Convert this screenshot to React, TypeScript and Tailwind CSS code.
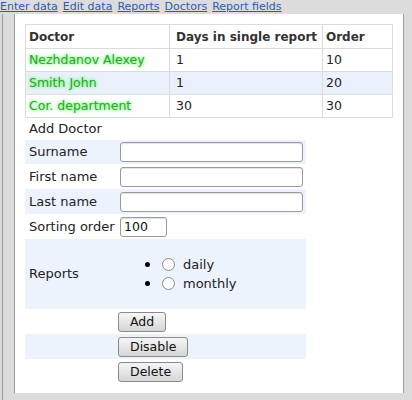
import React from 'react';

const navLinks = ['Enter data', 'Edit data', 'Reports', 'Doctors', 'Report fields'];

const doctors = [
  { name: 'Nezhdanov Alexey', days: '1', order: '10' },
  { name: 'Smith John', days: '1', order: '20' },
  { name: 'Cor. department', days: '30', order: '30' },
];

const font = { fontFamily: '"DejaVu Sans", Verdana, sans-serif' };

const TextInput = ({ className = '', value = '' }: any) => (
  <input
    defaultValue={value}
    className={`block h-[20px] rounded-[3px] border border-[#9a9a9a] bg-white px-[3px] text-[12.5px] text-[#111] outline-none shadow-[inset_0_1px_1px_rgba(0,0,0,0.12)] ${className}`}
  />
);

const Btn = ({ label }: any) => (
  <button className="block h-[20px] rounded-[3px] border border-[#8a8a8a] bg-gradient-to-b from-[#f6f6f6] to-[#d6d6d6] px-[11px] text-[12.5px] leading-[18px] text-[#111]">
    {label}
  </button>
);

export default function App() {
  return (
    <div style={font} className="min-h-[400px] w-[412px] bg-[#dcdcdc] text-[#222]">
      <div className="flex h-[14px] gap-[5px] text-[11px] leading-[13px]">
        {navLinks.map((l) => (
          <a key={l} href="#" className="text-[#2a5db0] underline">
            {l}
          </a>
        ))}
      </div>
      <div className="ml-[2px] min-h-[386px] border-l border-[#9a9a9a] pb-[8px] pl-[11px]">
        <div className="w-[390px] border-x border-[#9a9a9a] bg-white p-[10px] pb-[9px]">
          <table className="w-[368px] border-collapse text-[12.5px]">
            <thead>
              <tr className="h-[24px] text-[12px]">
                <th className="w-[144px] border border-[#dcdcdc] pl-[3px] text-left font-bold text-[#333]">Doctor</th>
                <th className="w-[153px] border border-[#dcdcdc] pl-[6px] text-left font-bold text-[#333]">Days in single report</th>
                <th className="border border-[#dcdcdc] pl-[3px] text-left font-bold text-[#333]">Order</th>
              </tr>
            </thead>
            <tbody>
              {doctors.map((d, i) => (
                <tr key={d.name} className={`h-[23px] ${i % 2 === 1 ? 'bg-[#eaf1fc]' : ''}`}>
                  <td
                    className="border border-[#dcdcdc] pl-[3px] text-[#3c9c3c]"
                    style={{ textShadow: '0 0 3px #44ff44, 0 0 5px #99ff99' }}
                  >
                    {d.name}
                  </td>
                  <td className="border border-[#dcdcdc] pl-[6px] text-[#222]">{d.days}</td>
                  <td className="border border-[#dcdcdc] pl-[3px] text-[#222]">{d.order}</td>
                </tr>
              ))}
            </tbody>
          </table>

          <div className="h-[22px] pl-[4px] text-[13px] leading-[22px]">Add Doctor</div>

          <table className="w-[281px] border-collapse text-[13px]">
            <tbody>
              <tr className="h-[24px] bg-[#edf3fd]">
                <td className="w-[93px] p-0 pl-[4px]">Surname</td>
                <td className="p-0 pl-[2px]"><TextInput className="w-[183px]" /></td>
              </tr>
              <tr className="h-[25px]">
                <td className="p-0 pl-[4px]">First name</td>
                <td className="p-0 pl-[2px]"><TextInput className="w-[183px]" /></td>
              </tr>
              <tr className="h-[25px] bg-[#edf3fd]">
                <td className="p-0 pl-[4px]">Last name</td>
                <td className="p-0 pl-[2px]"><TextInput className="w-[183px]" /></td>
              </tr>
              <tr className="h-[25px]">
                <td className="whitespace-nowrap p-0 pl-[4px]">Sorting order</td>
                <td className="p-0 pl-[2px]"><TextInput className="w-[47px]" value="100" /></td>
              </tr>
              <tr className="h-[70px] bg-[#edf3fd]">
                <td className="p-0 pl-[4px]">Reports</td>
                <td className="p-0">
                  <ul className="flex flex-col gap-[3px] pl-[27px]">
                    {['daily', 'monthly'].map((r) => (
                      <li key={r} className="flex h-[16px] items-center leading-[16px]">
                        <span className="mr-[12px] inline-block h-[5px] w-[5px] rounded-full bg-black" />
                        <label className="flex items-center gap-[8px]">
                          <span className="inline-block h-[13px] w-[13px] rounded-full border border-[#8a8a8a] bg-white" />
                          <span>{r}</span>
                        </label>
                      </li>
                    ))}
                  </ul>
                </td>
              </tr>
              <tr className="h-[25px]">
                <td className="p-0" />
                <td className="p-0"><Btn label="Add" /></td>
              </tr>
              <tr className="h-[25px] bg-[#edf3fd]">
                <td className="p-0" />
                <td className="p-0"><Btn label="Disable" /></td>
              </tr>
              <tr className="h-[25px]">
                <td className="p-0" />
                <td className="p-0"><Btn label="Delete" /></td>
              </tr>
            </tbody>
          </table>
        </div>
      </div>
    </div>
  );
}
